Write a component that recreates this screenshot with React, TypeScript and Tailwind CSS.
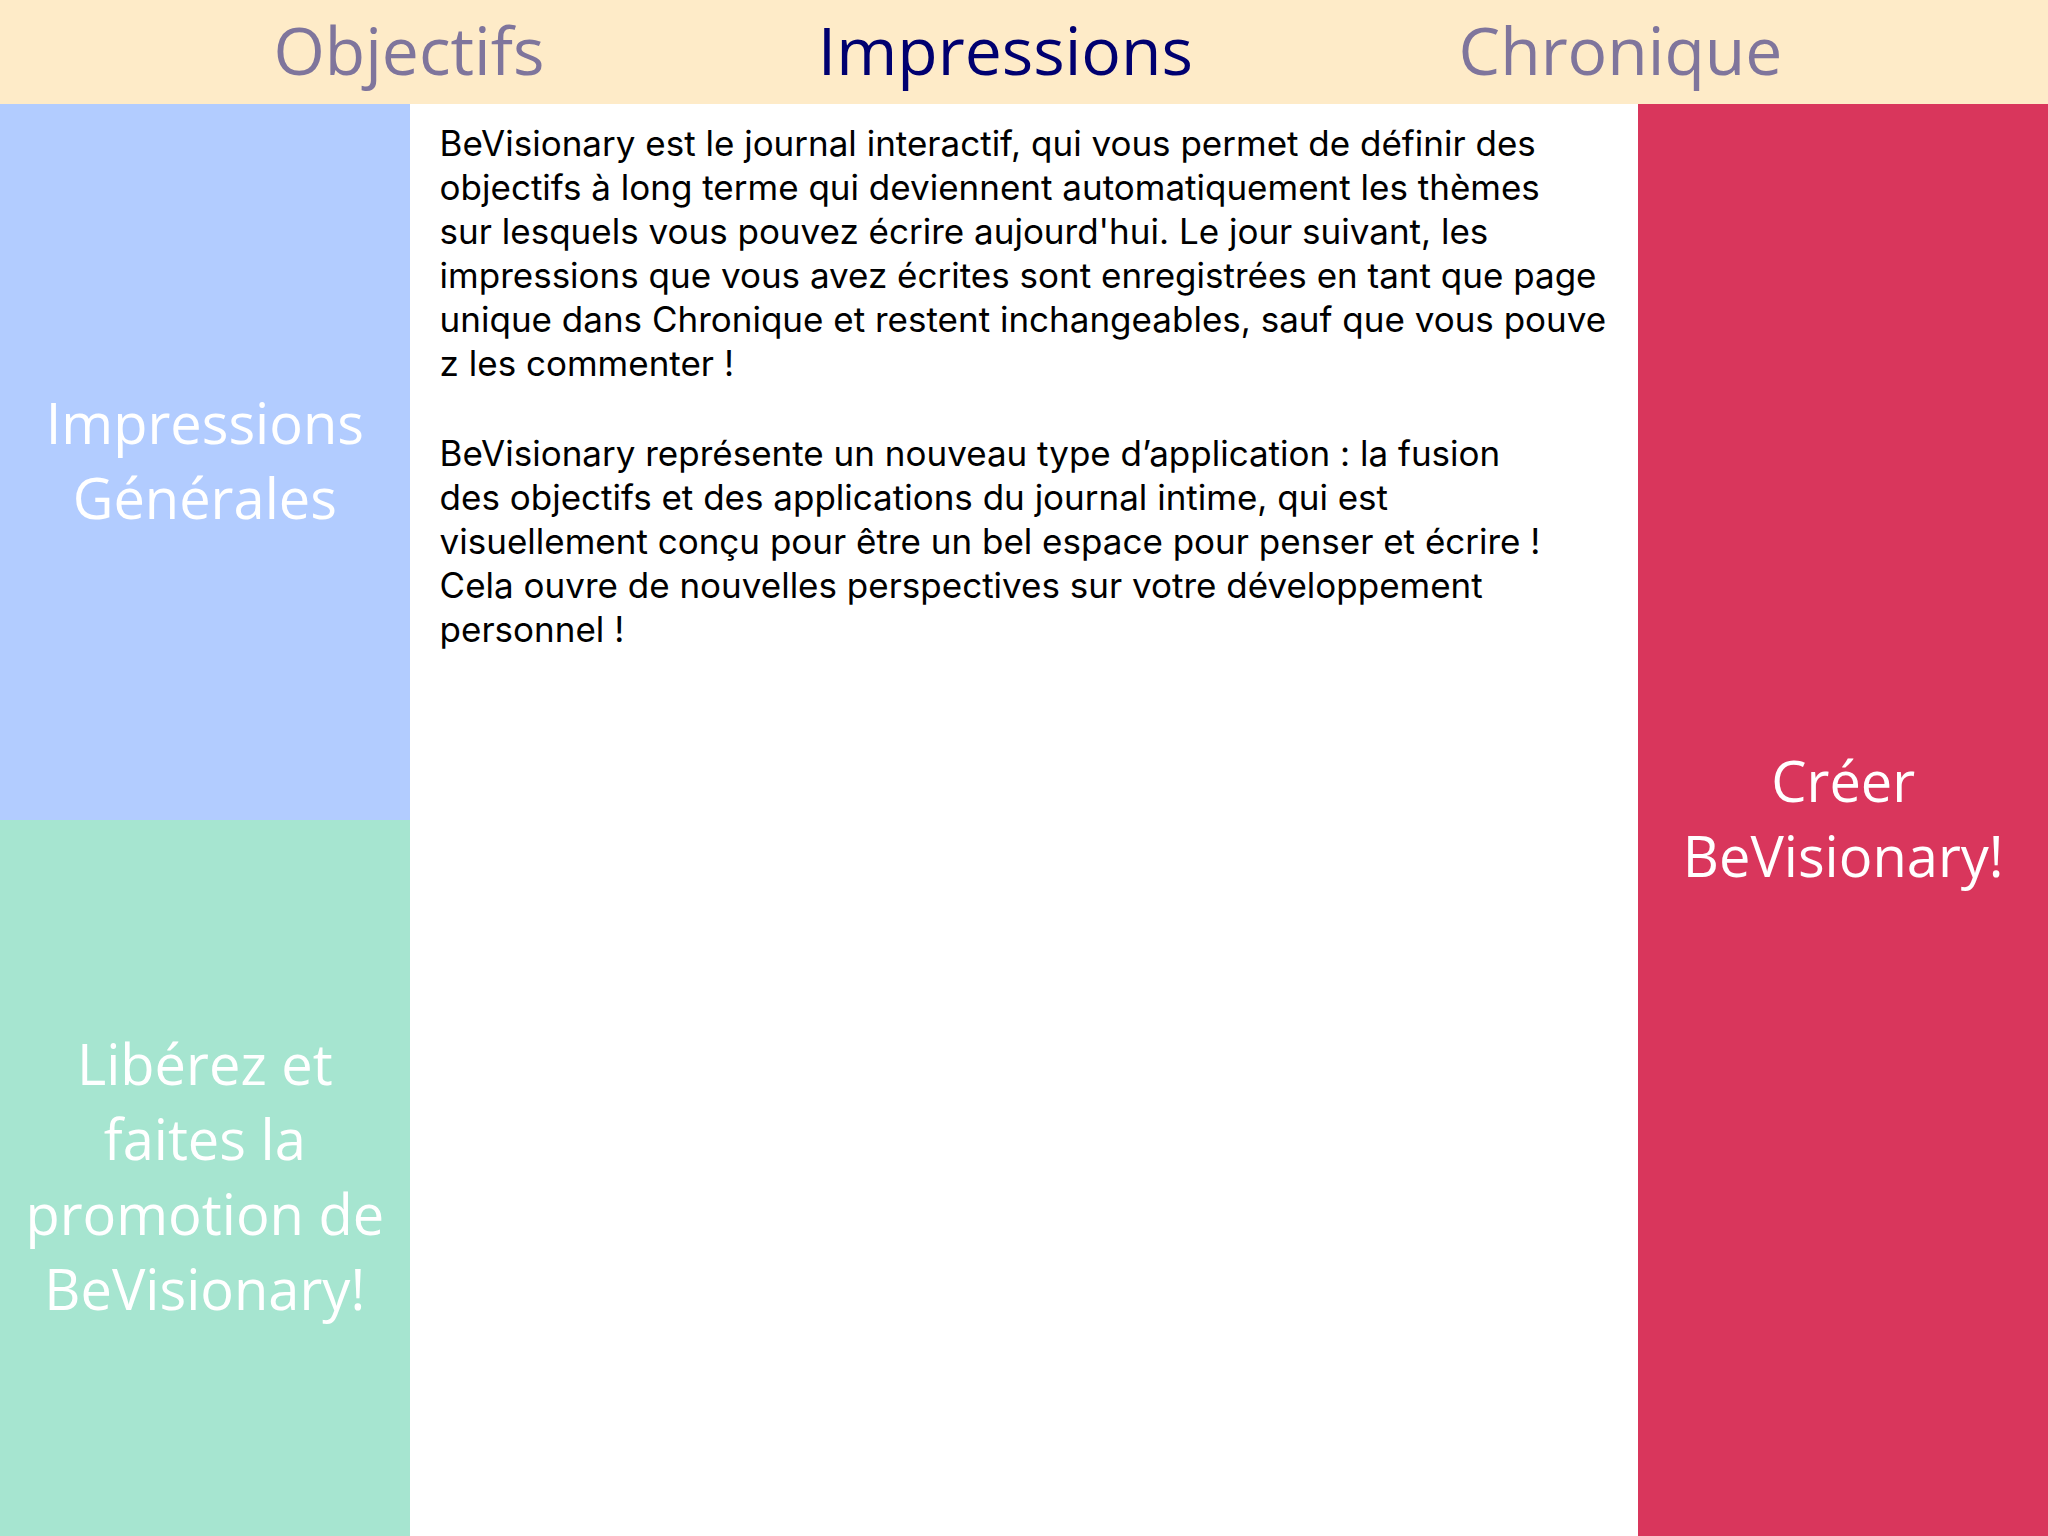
const display = "font-['Open_Sans',sans-serif]";

const tabs = [
  { name: 'Objectifs', active: false },
  { name: 'Impressions', active: true },
  { name: 'Chronique', active: false },
];

const entry = [
  ['BeVisionary est le journal interactif, qui vous permet de définir des', 'objectifs à long terme qui deviennent automatiquement les thèmes', "sur lesquels vous pouvez écrire aujourd'hui. Le jour suivant, les", 'impressions que vous avez écrites sont enregistrées en tant que page', 'unique dans Chronique et restent inchangeables, sauf que vous pouve', 'z les commenter !'],
  ['BeVisionary représente un nouveau type d’application : la fusion', 'des objectifs et des applications du journal intime, qui est', 'visuellement conçu pour être un bel espace pour penser et écrire !', 'Cela ouvre de nouvelles perspectives sur votre développement', 'personnel !'],
];

function Lines({ lines }: { lines: string[] }) {
  return (
    <>
      {lines.map((line) => (
        <span key={line} className="block whitespace-nowrap">{line}</span>
      ))}
    </>
  );
}

export default function App() {
  return (
    <div className="flex min-h-screen flex-col bg-white">
      <nav className={`grid h-[104px] grid-cols-[22fr_auto_23fr] items-center bg-[#feebc8] pb-1.5 text-[66px] leading-[88px] ${display}`}>
        {tabs.map((tab) => (
          <button key={tab.name} type="button" className={tab.active ? 'text-[#000070]' : 'text-[#7f759c]'}>
            {tab.name}
          </button>
        ))}
      </nav>
      <div className="grid flex-1 grid-cols-[minmax(0,1fr)_minmax(0,3fr)_minmax(0,1fr)]">
        <aside className={`grid grid-rows-2 text-[56px] leading-[75px] text-white ${display}`}>
          <button type="button" className="bg-[#b2ccff] pb-1"><Lines lines={['Impressions', 'Générales']} /></button>
          <button type="button" className="bg-[#a6e5d0] pb-1"><Lines lines={['Libérez et', 'faites la', 'promotion de', 'BeVisionary!']} /></button>
        </aside>
        <main className="flex flex-col gap-[46px] px-[30px] pt-[17px] font-['Inter',sans-serif] text-[35px] leading-[44px] text-black">
          {entry.map((lines) => (
            <p key={lines[0]}><Lines lines={lines} /></p>
          ))}
        </main>
        <button type="button" className={`bg-[#d9365c] pb-1 text-[56px] leading-[75px] text-white ${display}`}>
          <Lines lines={['Créer', 'BeVisionary!']} />
        </button>
      </div>
    </div>
  );
}
